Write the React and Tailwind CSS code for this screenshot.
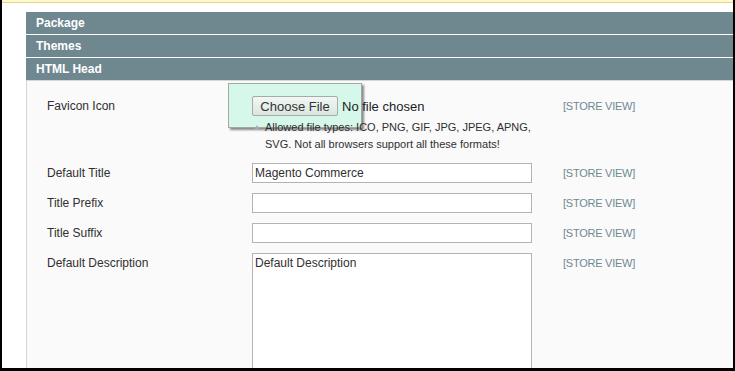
const sections = ['Package', 'Themes', 'HTML Head']

function StoreView() {
  return <span className="text-[11px] leading-[20px] tracking-[-0.25px] text-[#6f8992]">[STORE VIEW]</span>
}

function Label({ children }) {
  return <div className="text-[12px] leading-[20px] text-[#2f2f2f]">{children}</div>
}

export default function App() {
  return (
    <div
      className="w-[735px] h-[371px] bg-black pl-[2px] pr-[2px] pb-[3px] overflow-hidden"
      style={{ fontFamily: '"Liberation Sans", Arial, sans-serif' }}
    >
      <div className="h-full bg-white flex flex-col overflow-hidden">
        <div className="h-[3px] shrink-0 bg-[#fff9cc] border-b border-[#e2d488]" />
        <div className="flex-1 flex flex-col pl-[24px] pt-[9px] min-h-0">
          {sections.map((s, i) => (
            <div
              key={s}
              className={`h-[22px] shrink-0 bg-[#6f878f] text-white font-bold text-[12px] leading-[22px] pl-[10px] ${
                i < sections.length - 1 ? 'mb-px' : ''
              }`}
            >
              {s}
            </div>
          ))}

          <div className="relative flex-1 min-h-0 bg-[#fafafa] border-l border-t border-[#d6d6d6] pl-[20px] pt-[15px] overflow-hidden">
            <div className="absolute left-[201px] top-[2px] w-[134px] h-[45px] bg-[#d5f8ea] border border-[#a3a8a6] shadow-[2px_2px_2px_rgba(0,0,0,0.45)]" />

            <div className="relative grid grid-cols-[205px_311px_1fr] gap-y-[10px]">
              <Label>Favicon Icon</Label>
              <div>
                <div className="flex items-center h-[20px]">
                  <span className="h-[20px] w-[86px] flex items-center justify-center pt-px border border-[#a6aaa8] rounded-[2px] bg-gradient-to-b from-[#f2f7f4] to-[#dbe6e0] text-[13px] text-[#333]">
                    Choose File
                  </span>
                  <span className="ml-[4px] pt-px text-[13px] text-[#222]">No file chosen</span>
                </div>
                <div className="relative mt-[3px] pl-[13px] text-[11px] leading-[17px] text-[#2f2f2f]">
                  <span className="absolute left-[2px] top-[6px] w-0 h-0 border-l-[3px] border-r-[3px] border-b-[5px] border-l-transparent border-r-transparent border-b-[#9fb0b0]" />
                  Allowed file types: ICO, PNG, GIF, JPG, JPEG, APNG,
                  <br />
                  SVG. Not all browsers support all these formats!
                </div>
              </div>
              <StoreView />

              <Label>Default Title</Label>
              <div className="w-[280px] h-[20px] bg-white border border-[#b3b3b3] text-[12px] leading-[18px] pl-[2px] text-[#2f2f2f]">
                Magento Commerce
              </div>
              <StoreView />

              <Label>Title Prefix</Label>
              <div className="w-[280px] h-[20px] bg-white border border-[#b3b3b3]" />
              <StoreView />

              <Label>Title Suffix</Label>
              <div className="w-[280px] h-[20px] bg-white border border-[#b3b3b3]" />
              <StoreView />

              <Label>Default Description</Label>
              <div className="w-[280px] h-[140px] bg-white border border-[#b3b3b3] text-[12px] leading-[18px] pl-[2px] text-[#2f2f2f]">
                Default Description
              </div>
              <StoreView />
            </div>
          </div>
        </div>
      </div>
    </div>
  )
}
